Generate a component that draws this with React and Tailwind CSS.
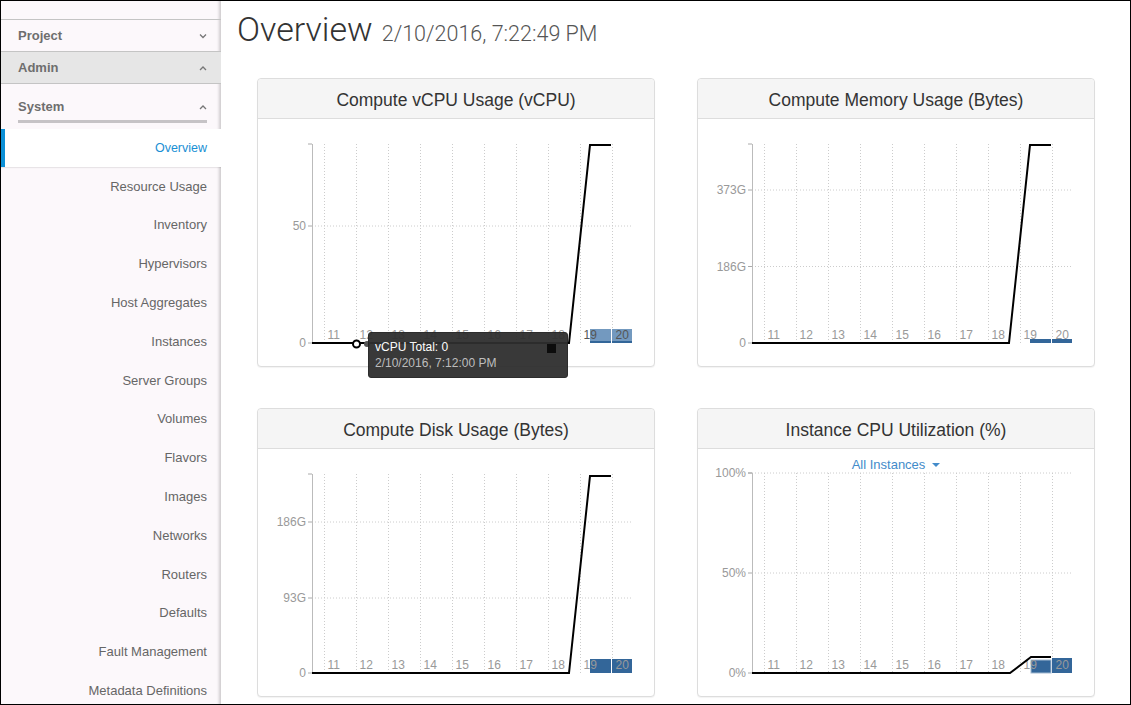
import React from 'react';

const navItems = [
  'Resource Usage',
  'Inventory',
  'Hypervisors',
  'Host Aggregates',
  'Instances',
  'Server Groups',
  'Volumes',
  'Flavors',
  'Images',
  'Networks',
  'Routers',
  'Defaults',
  'Fault Management',
  'Metadata Definitions',
];

const Chevron = ({ up }) => (
  <svg width="8" height="6" viewBox="0 0 8 6" className="text-[#777]">
    <polyline
      points={up ? '1,5 4,2 7,5' : '1,1.5 4,4.5 7,1.5'}
      fill="none"
      stroke="currentColor"
      strokeWidth="1.3"
    />
  </svg>
);

const gridX = [66.5, 98.5, 130.5, 162.5, 194.5, 226.5, 258.5, 290.5, 322.5, 354.5];
const hours = [11, 12, 13, 14, 15, 16, 17, 18, 19, 20];

const Chart = ({ ticks, top, line, bars, highlight, extra }) => (
  <svg width="398" height="249" viewBox="0 0 398 249" className="block">
    {/* vertical grid */}
    {gridX.map((x) => (
      <line key={x} x1={x} y1={top} x2={x} y2="224" stroke="#ccc" strokeDasharray="1 2" />
    ))}
    {/* horizontal grid */}
    {ticks.map((t) => (
      <g key={t.label}>
        {t.y !== 224 && (
          <line x1="54" y1={t.y} x2="374" y2={t.y} stroke="#ccc" strokeDasharray="1 2" />
        )}
        <line x1="50" y1={t.y} x2="54" y2={t.y} stroke="#aaa" />
        <text
          x="48"
          y={t.y + 4}
          textAnchor="end"
          fontSize="12"
          fill="#999"
          fontFamily="Liberation Sans, Arial, sans-serif"
        >
          {t.label}
        </text>
      </g>
    ))}
    <line x1="50" y1={top} x2="54" y2={top} stroke="#aaa" />
    <line x1="54.5" y1={top} x2="54.5" y2="224" stroke="#bbb" />
    {bars.map((b, i) => (
      <g key={i}>
        <rect
          x={b.x}
          y={b.y}
          width={b.w}
          height={224 - b.y}
          fill={highlight ? '#7399bf' : '#336699'}
          stroke={b.stroke || 'none'}
        />
        {highlight && <rect x={b.x} y="222" width={b.w} height="2" fill="#336699" />}
      </g>
    ))}
    {hours.map((h, i) => (
      <text
        key={h}
        x={gridX[i] + 3}
        y="220"
        fontSize="12"
        fill={i >= 8 && highlight ? '#555' : '#999'}
        fontFamily="Liberation Sans, Arial, sans-serif"
      >
        {h}
      </text>
    ))}
    <polyline points={line} fill="none" stroke="#000" strokeWidth="2" />
    {extra}
  </svg>
);

const Card = ({ title, children, tooltip }) => (
  <div className="relative w-[398px] h-[289px] bg-white border border-[#ddd] rounded-[4px] shadow-[0_1px_1px_rgba(0,0,0,0.05)]">
    <div className="h-[40px] pt-[4px] bg-[#f5f5f5] border-b border-[#ddd] rounded-t-[4px] flex items-center justify-center text-[17.5px] text-[#333] font-['Liberation_Sans',Arial,sans-serif]">
      {title}
    </div>
    {children}
    {tooltip}
  </div>
);

export default function App() {
  return (
    <div className="w-[1131px] h-[705px] border border-black overflow-hidden flex bg-white font-['Liberation_Sans',Arial,sans-serif]">
      {/* sidebar */}
      <div className="w-[220px] shrink-0 h-full overflow-hidden bg-[#fcf8fb] shadow-[inset_-4px_0_3px_-2px_rgba(0,0,0,0.18)] flex flex-col">
        <div className="h-[19px] shrink-0 border-b border-[#c4c4c4]" />
        <div className="h-[32px] shrink-0 border-b border-[#c4c4c4] flex items-center justify-between pl-[17px] pr-[14px]">
          <span className="text-[13px] font-bold text-[#6e6e6e]">Project</span>
          <Chevron />
        </div>
        <div className="h-[32px] shrink-0 border-b border-[#c4c4c4] bg-[#e6e6e6] flex items-center justify-between pl-[17px] pr-[14px]">
          <span className="text-[13px] font-bold text-[#6e6e6e]">Admin</span>
          <Chevron up />
        </div>
        <div className="shrink-0 pt-[14px] pl-[17px] pr-[14px]">
          <div className="flex items-center justify-between h-[18px]">
            <span className="text-[13px] font-bold text-[#6e6e6e]">System</span>
            <Chevron up />
          </div>
          <div className="mt-[4px] h-[3px] bg-[#c6c3c6]" />
        </div>
        <div className="shrink-0 mt-[6px] h-[38px] bg-white border-l-[4px] border-[#0b8fd6] flex items-center justify-end pr-[14px] shadow-[0_1px_1px_rgba(0,0,0,0.08)]">
          <span className="text-[12.5px] text-[#1a8fd4]">Overview</span>
        </div>
        {navItems.map((item) => (
          <div key={item} className="h-[38.8px] shrink-0 flex items-center justify-end pr-[14px] text-[13px] text-[#666]">
            {item}
          </div>
        ))}
      </div>

      {/* main */}
      <div className="flex-1 pl-[16px]">
        <div className="flex items-baseline gap-[9px] h-[58px] pt-[3px]">
          <span className="text-[34px] font-light text-[#333] font-['Roboto',sans-serif]">Overview</span>
          <span className="text-[21.5px] font-light text-[#555] font-['Roboto',sans-serif]">2/10/2016, 7:22:49 PM</span>
        </div>
        <div className="grid grid-cols-[398px_398px] gap-x-[42px] gap-y-[41px] pl-[20px] pt-[19px]">
          <Card
            title="Compute vCPU Usage (vCPU)"
            tooltip={
              <div className="absolute left-[110px] top-[253px] w-[200px] h-[46px] bg-[#2f2f2f] border border-[#222] rounded-[3px] px-[6px] pt-[6px] text-[12px] leading-[16px] opacity-95">
                <div className="text-white">vCPU Total: 0</div>
                <div className="text-[#bbb]">2/10/2016, 7:12:00 PM</div>
                <div className="absolute left-[178px] top-[11px] w-[9px] h-[9px] bg-black" />
              </div>
            }
          >
            <Chart
              top={25}
              ticks={[
                { label: '50', y: 107 },
                { label: '0', y: 224 },
              ]}
              line="54,224 311,224 332,26 353,26"
              bars={[
                { x: 332, y: 210, w: 21 },
                { x: 354, y: 210, w: 20 },
              ]}
              highlight
              extra={
                <g>
                  <circle cx="98.5" cy="225" r="3.5" fill="#fff" stroke="#000" strokeWidth="2" />
                  <circle cx="109" cy="225" r="3" fill="#555" />
                </g>
              }
            />
          </Card>
          <Card title="Compute Memory Usage (Bytes)">
            <Chart
              top={25}
              ticks={[
                { label: '373G', y: 71 },
                { label: '186G', y: 147.5 },
                { label: '0', y: 224 },
              ]}
              line="54,224 311,224 332,26 353,26"
              bars={[
                { x: 332, y: 220, w: 21 },
                { x: 354, y: 220, w: 20 },
              ]}
            />
          </Card>
          <Card title="Compute Disk Usage (Bytes)">
            <Chart
              top={25}
              ticks={[
                { label: '186G', y: 73 },
                { label: '93G', y: 149 },
                { label: '0', y: 224 },
              ]}
              line="54,224 311,224 332,27 353,27"
              bars={[
                { x: 332, y: 210, w: 21 },
                { x: 354, y: 210, w: 20 },
              ]}
            />
          </Card>
          <Card title="Instance CPU Utilization (%)">
            <div className="absolute left-0 right-0 top-[46px] flex justify-center items-center gap-[7px] text-[13px] text-[#428bca]">
              <span>All Instances</span>
              <span className="w-0 h-0 border-l-[4px] border-r-[4px] border-t-[4px] border-l-transparent border-r-transparent border-t-[#428bca]" />
            </div>
            <Chart
              top={24}
              ticks={[
                { label: '100%', y: 24 },
                { label: '50%', y: 124 },
                { label: '0%', y: 224 },
              ]}
              line="54,224 312,224 333,208 353,208"
              bars={[
                { x: 333, y: 211, w: 20, stroke: '#a3bad1' },
                { x: 354, y: 209, w: 20 },
              ]}
            />
          </Card>
        </div>
      </div>
    </div>
  );
}
